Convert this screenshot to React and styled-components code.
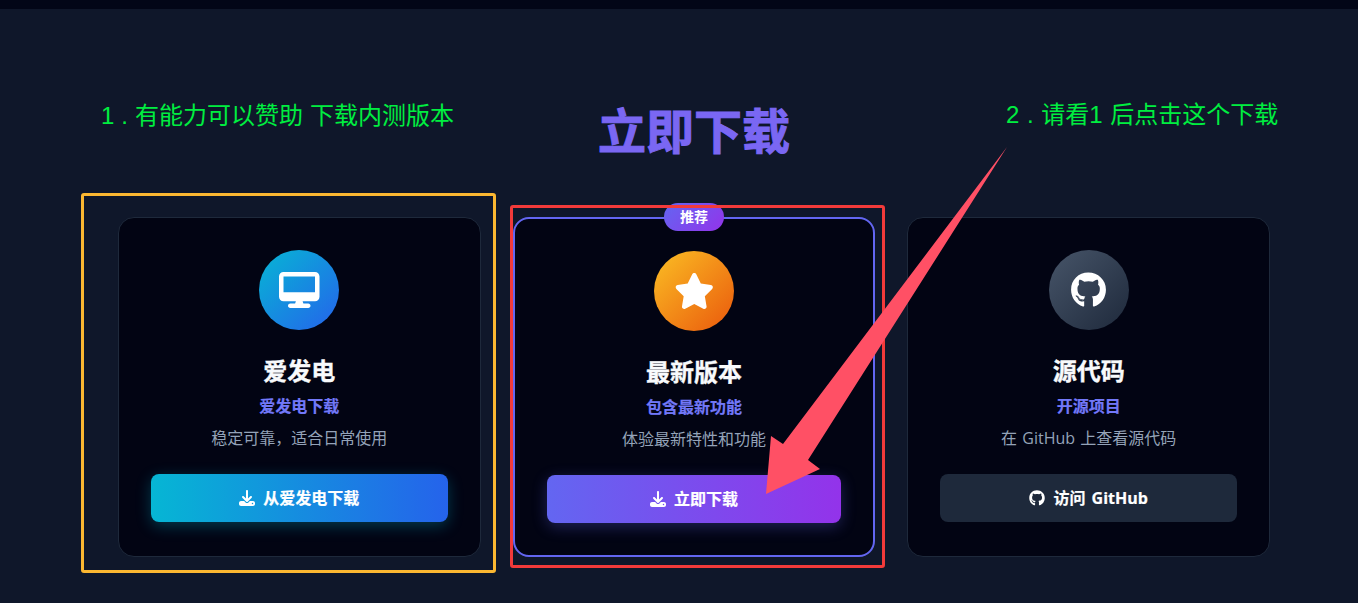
import React from "react";
import styled, { createGlobalStyle } from "styled-components";
import { FaDesktop, FaStar, FaGithub, FaDownload } from "react-icons/fa6";

const Global = createGlobalStyle`
  html, body { margin: 0; padding: 0; background: #0f172a; }
  body { font-family: "Open Sans", "Noto Sans CJK SC", sans-serif; overflow: hidden; }
`;

const Page = styled.div`
  position: relative;
  width: 1358px;
  height: 603px;
  overflow: hidden;
  background: #0f172a;
`;
const TopBar = styled.div`
  height: 9px;
  background: #020617;
`;
const Section = styled.section`
  width: 1152px;
  margin-left: 118px;
  padding-top: 87px;
`;
const Heading = styled.h2`
  margin: 0 0 52px;
  height: 69px;
  font-size: 48px;
  line-height: 69px;
  font-weight: 700;
  text-align: center;
  color: #7a67f3;
  -webkit-text-stroke: 1px #7a67f3;
`;
const Grid = styled.div`
  display: grid;
  grid-template-columns: repeat(3, 1fr);
  gap: 32px;
`;
const Card = styled.article`
  position: relative;
  display: flex;
  flex-direction: column;
  align-items: center;
  height: 340px;
  box-sizing: border-box;
  padding: 32px;
  background: #020413;
  border: ${(p) => (p.$featured ? "2px solid #6366f1" : "1px solid #1e293b")};
  border-radius: 16px;
  text-align: center;
`;
const Badge = styled.span`
  position: absolute;
  top: -16px;
  left: 50%;
  transform: translateX(-50%);
  width: 60px;
  height: 28px;
  line-height: 27px;
  border-radius: 14px;
  background: linear-gradient(135deg, #6366f1, #9333ea);
  color: #fff;
  font-size: 14px;
  font-weight: 700;
`;
const IconCircle = styled.div`
  display: flex;
  align-items: center;
  justify-content: center;
  flex: none;
  width: 80px;
  height: 80px;
  border-radius: 50%;
  margin-bottom: 24px;
  color: #fff;
  background: ${(p) => p.$bg};
  svg {
    width: ${(p) => p.$iconWidth}px;
    height: 36px;
  }
`;
const Title = styled.h3`
  margin: 0 0 6px;
  font-size: 24px;
  line-height: 34px;
  font-weight: 700;
  color: #f8fafc;
  -webkit-text-stroke: 0.4px #f8fafc;
`;
const Subtitle = styled.p`
  margin: 0 0 8px;
  font-size: 16px;
  line-height: 24px;
  font-weight: 700;
  color: #7278f8;
  -webkit-text-stroke: 0.2px #7278f8;
`;
const Description = styled.p`
  margin: 0 0 24px;
  font-size: 16px;
  line-height: 24px;
  word-spacing: 1px;
  color: #94a3b8;
`;
const DownloadButton = styled.a`
  display: flex;
  align-items: center;
  justify-content: center;
  gap: 8px;
  flex: none;
  width: 100%;
  height: 48px;
  border-radius: 8px;
  color: #fff;
  font-size: 16px;
  line-height: 46px;
  font-weight: 700;
  word-spacing: 2px;
  -webkit-text-stroke: 0.2px #fff;
  background: ${(p) => p.$bg};
  box-shadow: ${(p) => p.$shadow || "none"};
`;
const Note = styled.div`
  position: absolute;
  top: ${(p) => p.$top}px;
  left: ${(p) => p.$left}px;
  font-family: "Liberation Sans", "Noto Sans CJK SC", sans-serif;
  font-size: 24px;
  line-height: 32px;
  word-spacing: ${(p) => p.$wordGap}px;
  color: #00ee40;
  white-space: nowrap;
`;
const Frame = styled.div`
  position: absolute;
  box-sizing: border-box;
  left: ${(p) => p.$x}px;
  top: ${(p) => p.$y}px;
  width: ${(p) => p.$w}px;
  height: ${(p) => p.$h}px;
  border: 3px solid ${(p) => p.$color};
  border-radius: 3px;
`;
const ArrowLayer = styled.svg`
  position: absolute;
  left: 0;
  top: 0;
  width: 1358px;
  height: 603px;
  pointer-events: none;
`;

const cards = [
  {
    icon: <FaDesktop />,
    iconWidth: 40.5,
    iconBg: "linear-gradient(135deg, #06b6d4, #2563eb)",
    title: "爱发电",
    sub: "爱发电下载",
    desc: "稳定可靠，适合日常使用",
    btnIcon: <FaDownload />,
    btn: "从爱发电下载",
    btnBg: "linear-gradient(90deg, #06b6d4, #2563eb)",
    shadow: "0 4px 15px rgba(6, 182, 212, 0.3)",
  },
  {
    featured: true,
    icon: <FaStar />,
    iconWidth: 40.5,
    iconBg: "linear-gradient(135deg, #fbbf24, #ea580c)",
    title: "最新版本",
    sub: "包含最新功能",
    desc: "体验最新特性和功能",
    btnIcon: <FaDownload />,
    btn: "立即下载",
    btnBg: "linear-gradient(90deg, #6366f1, #9333ea)",
    shadow: "0 4px 15px rgba(99, 102, 241, 0.3)",
  },
  {
    icon: <FaGithub />,
    iconWidth: 35,
    iconBg: "linear-gradient(135deg, #475569, #1e293b)",
    title: "源代码",
    sub: "开源项目",
    desc: "在 GitHub 上查看源代码",
    btnIcon: <FaGithub />,
    btn: "访问 GitHub",
    btnBg: "#1e293b",
  },
];

export default function App() {
  return (
    <Page>
      <Global />
      <TopBar />
      <Section>
        <Heading>立即下载</Heading>
        <Grid>
          {cards.map((c) => (
            <Card key={c.title} $featured={c.featured}>
              {c.featured && <Badge>推荐</Badge>}
              <IconCircle $bg={c.iconBg} $iconWidth={c.iconWidth}>{c.icon}</IconCircle>
              <Title>{c.title}</Title>
              <Subtitle>{c.sub}</Subtitle>
              <Description>{c.desc}</Description>
              <DownloadButton $bg={c.btnBg} $shadow={c.shadow}>
                {c.btnIcon}
                <span>{c.btn}</span>
              </DownloadButton>
            </Card>
          ))}
        </Grid>
      </Section>
      <Note $left={101} $top={100} $wordGap={0.3}>1 . 有能力可以赞助 下载内测版本</Note>
      <Note $left={1006} $top={99} $wordGap={1}>2 . 请看1 后点击这个下载</Note>
      <Frame $x={81} $y={193} $w={415} $h={380} $color="#fbb731" />
      <Frame $x={510} $y={205} $w={375} $h={363} $color="#f23a3a" />
      <ArrowLayer viewBox="0 0 1358 603">
        <polygon points="1007,147 808,460 820,469 766,494 771,436 783,444" fill="#ff5065" />
      </ArrowLayer>
    </Page>
  );
}
